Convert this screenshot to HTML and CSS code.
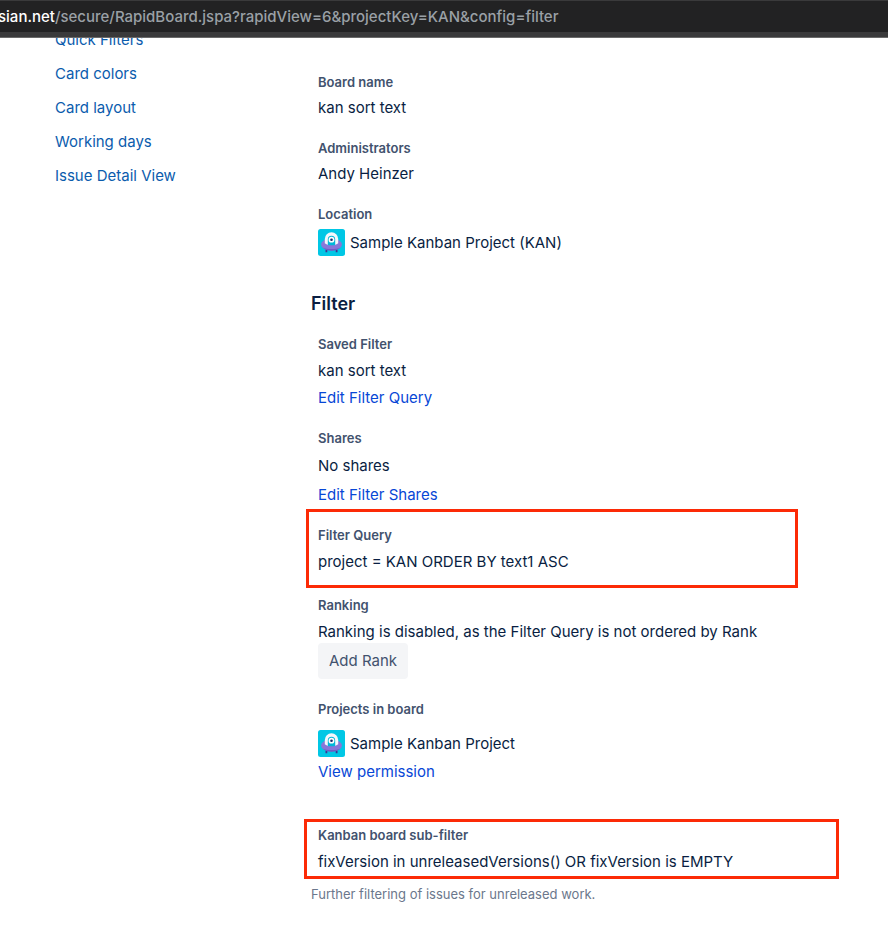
FILE: index.html
```html
<!DOCTYPE html>
<html lang="en">
<head>
<meta charset="utf-8">
<meta name="viewport" content="width=device-width, initial-scale=1">
<title>Board settings</title>
<link rel="stylesheet" href="styles.css">
</head>
<body>
<svg class="sprite" width="0" height="0" aria-hidden="true">
  <symbol id="avatar" viewBox="0 0 27 27">
    <rect width="27" height="27" rx="2.5" fill="#00c7e5"/>
    <path d="M7.500 20.500h1.800v2.700H7.500zM17.700 20.500h1.800v2.700h-1.800z" fill="#403294"/>
    <ellipse cx="13.500" cy="15.500" rx="10.500" ry="6" fill="#8777d9"/>
    <path d="M4.500 18.600c4 2 14 2 18 0-1.800 2-5 3.200-9 3.200s-7.200-1.200-9-3.200z" fill="#6f5cc4"/>
    <path d="M6.800 14.200V10a6.700 6.700 0 0 1 13.400 0v4.200c-2.500 2.500-10.900 2.500-13.400 0z" fill="#f4f7fb"/>
    <path d="M9.800 16v-5.500a3.700 3.700 0 0 1 7.400 0V16c-2 .4-5.400.4-7.400 0z" fill="#00b8d9"/>
    <circle cx="13.500" cy="10.700" r="2.900" fill="#fff"/>
    <circle cx="13.500" cy="10.700" r="1.300" fill="#172b6d"/>
  </symbol>
</svg>
<header class="browser-bar">
  <div class="address"><span class="host">sian.net</span>/secure/RapidBoard.jspa?rapidView=6&amp;projectKey=KAN&amp;config=filter</div>
</header>
<div class="page">
  <nav class="side-nav" aria-label="Board configuration">
    <a href="#">Quick Filters</a>
    <a href="#">Card colors</a>
    <a href="#">Card layout</a>
    <a href="#">Working days</a>
    <a href="#">Issue Detail View</a>
  </nav>
  <main class="settings">
    <section class="fields general">
      <div class="field"><h3>Board name</h3><p>kan sort text</p></div>
      <div class="field"><h3>Administrators</h3><p>Andy Heinzer</p></div>
      <div class="field location"><h3>Location</h3>
        <p class="project"><svg class="avatar" aria-hidden="true"><use href="#avatar"/></svg>Sample Kanban Project (KAN)</p>
      </div>
    </section>
    <h2>Filter</h2>
    <section class="fields filter">
      <div class="field"><h3>Saved Filter</h3><p>kan sort text</p><a href="#">Edit Filter Query</a></div>
      <div class="field shares"><h3>Shares</h3><p>No shares</p><a href="#">Edit Filter Shares</a></div>
      <div class="field marked query"><h3>Filter Query</h3><p>project = KAN ORDER BY text1 ASC</p></div>
      <div class="field ranking"><h3>Ranking</h3><p>Ranking is disabled, as the Filter Query is not ordered by Rank</p><button type="button">Add Rank</button></div>
      <div class="field projects"><h3>Projects in board</h3>
        <p class="project"><svg class="avatar" aria-hidden="true"><use href="#avatar"/></svg>Sample Kanban Project</p>
        <a href="#">View permission</a>
      </div>
      <div class="field marked sub-filter"><h3>Kanban board sub-filter</h3><p>fixVersion in unreleasedVersions() OR fixVersion is EMPTY</p></div>
    </section>
    <p class="hint">Further filtering of issues for unreleased work.</p>
  </main>
</div>
</body>
</html>
```
FILE: styles.css
```css
* { box-sizing: border-box; }

body {
  margin: 0;
  background: #fff;
  color: #091e42;
  font: 15px/20px Inter, "Liberation Sans", sans-serif;
}

h2, h3, p { margin: 0; }
a { text-decoration: none; }
.sprite { position: absolute; }

.browser-bar {
  position: relative;
  z-index: 1;
  height: 38px;
  padding-top: 1px;
  background: #3a3a3b;
  border-bottom: 1px solid #6a6a6a;
}

.address {
  height: 31px;
  background: #222223;
  color: #9aa0a6;
  font-size: 15px;
  font-weight: 500;
  line-height: 32px;
  text-indent: -2px;
  white-space: nowrap;
  overflow: hidden;
}

.host { color: #fff; }

.page {
  display: grid;
  grid-template-columns: 256px minmax(0, 1fr);
  column-gap: 55px;
}

.side-nav {
  display: flex;
  flex-direction: column;
  align-items: flex-start;
  gap: 14px;
  margin-top: -8px;
  padding-left: 55px;
}

.side-nav a { color: #0b5cad; }

.settings { padding-top: 34px; }
.fields { padding-left: 7px; }

.field {
  display: flex;
  flex-direction: column;
  align-items: flex-start;
  gap: 6px;
  margin-bottom: 20px;
}

.filter .field { gap: 7px; }
.general .location { gap: 5px; }

h3 {
  color: #42526e;
  font-size: 13px;
  font-weight: 600;
  line-height: 20px;
}

h2 {
  margin: 36px 0 18px;
  font-size: 18px;
  font-weight: 600;
  line-height: 24px;
}

.field a { color: #0747d6; }

.project {
  display: flex;
  align-items: center;
  gap: 5px;
  height: 27px;
}

.avatar { width: 27px; height: 27px; }

.filter .shares { gap: 8px; margin-bottom: 4px; }
.shares a { margin-top: 1px; }

.marked {
  max-width: 100%;
  border: 3px solid #fc2a06;
}

.filter .query {
  width: 492px;
  margin: 0 0 7px -12px;
  padding: 13px 9px;
}

.filter .ranking button {
  height: 36px;
  margin-top: -6px;
  padding: 0 11px;
  border: 0;
  border-radius: 4px;
  background: #f4f5f7;
  color: #42526e;
  font: inherit;
}

.filter .projects { gap: 11px; margin-bottom: 37px; }
.projects a { margin-top: -6px; }

.filter .sub-filter {
  width: 535px;
  margin: 0 0 5px -14px;
  padding: 3px 11px 4px;
}

.hint {
  color: #6b778c;
  font-size: 13px;
}
```
